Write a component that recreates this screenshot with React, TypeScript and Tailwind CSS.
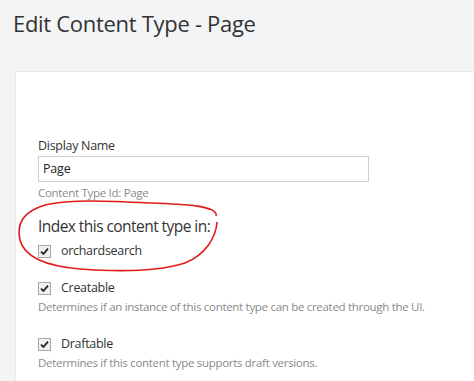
import React from "react";

function Check() {
  return (
    <span className="inline-flex h-[13px] w-[13px] items-center justify-center border border-[#a8a8a8] bg-[#f0f0f0] shrink-0">
      <svg width="9" height="9" viewBox="0 0 9 9">
        <path d="M1 4.6 L3.4 7 L8 1.6" stroke="#222" strokeWidth="1.8" fill="none" />
      </svg>
    </span>
  );
}

export default function App() {
  return (
    <div
      className="relative h-[381px] w-[474px] overflow-hidden bg-[#f3f4f6] text-[#333]"
      style={{ fontFamily: '"Open Sans", "Noto Sans", sans-serif' }}
    >
      <h1 className="pl-[13px] pt-[8px] text-[22px] leading-[30px] font-normal tracking-[-0.3px] text-[#333]">
        Edit Content Type - Page
      </h1>
      <div className="ml-[15px] mt-[33px] h-[320px] bg-white border-t border-l border-[#e8e9eb] pl-[22px] pt-[65px]">
        <div className="text-[12.5px] leading-[18px] tracking-[-0.3px]">Display Name</div>
        <div className="mt-[1px] h-[26px] w-[331px] border border-[#cfcfcf] px-[4px] text-[12.5px] leading-[24px] tracking-[-0.2px] text-[#222]">
          Page
        </div>
        <div className="mt-[3px] text-[11.5px] leading-[16px] tracking-[-0.3px] text-[#8a8a8a]">Content Type Id: Page</div>
        <div className="mt-[15px] text-[15.5px] leading-[20px] tracking-[-0.55px] text-[#333]">Index this content type in:</div>
        <div className="mt-[6px] flex items-center gap-[10px] text-[12.5px] leading-[18px] tracking-[-0.3px]">
          <Check />
          <span>orchardsearch</span>
        </div>
        <div className="mt-[19px] flex items-center gap-[10px] text-[12.5px] leading-[18px] tracking-[-0.3px]">
          <Check />
          <span>Creatable</span>
        </div>
        <div className="mt-[2px] text-[11.5px] leading-[16px] tracking-[-0.3px] text-[#8a8a8a]">
          Determines if an instance of this content type can be created through the UI.
        </div>
        <div className="mt-[20px] flex items-center gap-[10px] text-[12.5px] leading-[18px] tracking-[-0.3px]">
          <Check />
          <span>Draftable</span>
        </div>
        <div className="mt-[2px] text-[11.5px] leading-[16px] tracking-[-0.3px] text-[#8a8a8a]">
          Determines if this content type supports draft versions.
        </div>
      </div>
      <svg className="absolute left-0 top-0 pointer-events-none" width="474" height="381">
        <path
          d="M216 216 C 219 206, 185 204, 150 203 C 110 201, 70 199, 45 205 C 25 211, 16 223, 20 240 C 24 256, 45 266, 80 269 C 120 272, 160 271, 185 263 C 205 255, 216 238, 217 222"
          stroke="#e01b1b"
          strokeWidth="1.6"
          fill="none"
        />
      </svg>
    </div>
  );
}
